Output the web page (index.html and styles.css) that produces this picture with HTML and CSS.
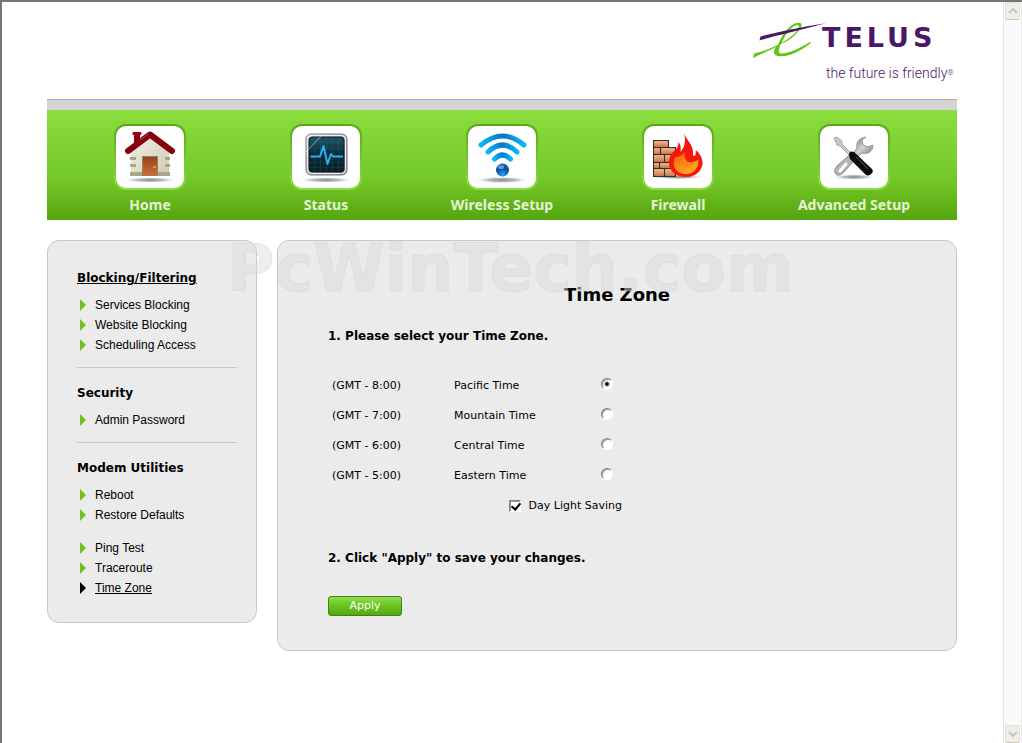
FILE: index.html
```html
<!DOCTYPE html>
<html lang="en">
<head>
  <meta charset="UTF-8" />
  <meta name="viewport" content="width=device-width, initial-scale=1.0"/>
  <title>Time Zone</title>
  <link rel="stylesheet" href="styles.css">
</head>
<body>
  <div class="page">
    <header class="header">
      <a class="logo" href="#">
        <span class="logo-row">
          <svg class="logo-mark" width="70" height="38" viewBox="0 0 70 38" aria-hidden="true">
            <path d="M1 38L2 33.500C18 30 34 22 43 13C47 9 48 5 45.500 5C42 5 35 12 31 20C27 27 25 33 29 33.500C36 34 48 28 58 22L59 23C49 31 35 38 26 36C21 35 21 31 24 27C16 31 9 34 1 38ZM26 25C29 17 35 7 43 3.500C49 1.500 51 4 48.500 8C44 16 35 22 26 25Z" fill="#5bc80f"/>
            <path d="M31 21C36 18 44 12 46 7C46 5 43 5 40 8C36 11 33 16 31 21Z" fill="#fff"/>
            <path d="M7.500 20.500L8.500 16.500Q42 8 74 3.300Q48 10 34 13.500Q20 16.500 7.500 20.500Z" fill="#4b1769"/>
          </svg>
          <span class="logo-name">TELUS</span>
        </span>
        <span class="logo-tag">the future is friendly<span class="logo-dot">®</span></span>
      </a>
    </header>

    <nav class="nav">
      <a href="#">
        <span class="tile">
          <svg width="68" height="62" viewBox="0 0 68 62" aria-hidden="true">
            <defs>
              <radialGradient id="shadow"><stop offset="0" stop-color="#888"/><stop offset="0.500" stop-color="#bbb"/><stop offset="1" stop-color="#fff" stop-opacity="0"/></radialGradient>
              <linearGradient id="wall" x1="0" y1="0" x2="1" y2="1"><stop offset="0" stop-color="#f2efe4"/><stop offset="1" stop-color="#cfcbb6"/></linearGradient>
              <linearGradient id="door" x1="0" y1="0" x2="0" y2="1"><stop offset="0" stop-color="#9c4317"/><stop offset="1" stop-color="#c4703c"/></linearGradient>
            </defs>
            <ellipse cx="34" cy="54" rx="28" ry="3" fill="url(#shadow)"/>
            <rect x="18" y="7" width="6" height="12" fill="#86000e"/>
            <rect x="16.500" y="6" width="9" height="3" rx="1" fill="#9b0716"/>
            <path d="M15 24L34 9L53 24V50H15Z" fill="url(#wall)"/>
            <path d="M14 31h6v3h-6zM14 38h6v3h-6zM14 46h12v4H14zM49 31h5v3h-5zM49 38h5v3h-5zM42 46h12v4H42z" fill="#aaa586"/>
            <path d="M26 50V30H42V50" fill="#8d8667"/>
            <rect x="27" y="31" width="14" height="19" fill="url(#door)"/>
            <path d="M37 41h3" stroke="#f5d08a"/>
            <path d="M12 25L34 8.500L56 25" fill="none" stroke="#86000e" stroke-width="6" stroke-linecap="round" stroke-linejoin="round"/>
            <path d="M24 14L33 7.500" stroke="#b5404b" stroke-width="1"/>
          </svg>
        </span>
        <span class="nav-label">Home</span>
      </a>
      <a href="#">
        <span class="tile">
          <svg width="68" height="62" viewBox="0 0 68 62" aria-hidden="true">
            <defs>
              <linearGradient id="frame" x1="0" y1="0" x2="1" y2="1"><stop offset="0" stop-color="#e4e4e8"/><stop offset="1" stop-color="#8b8b91"/></linearGradient>
              <linearGradient id="screen" x1="0" y1="0" x2="0" y2="1"><stop offset="0" stop-color="#1d5566"/><stop offset="0.500" stop-color="#0b2b38"/><stop offset="1" stop-color="#082028"/></linearGradient>
            </defs>
            <ellipse cx="34" cy="54" rx="28" ry="3" fill="url(#shadow)"/>
            <rect x="14" y="8" width="41" height="41" rx="5" fill="url(#frame)" stroke="#7d7d83"/>
            <rect x="15.500" y="9.500" width="38" height="38" rx="4" fill="none" stroke="#f0f0f3"/>
            <rect x="17" y="11" width="35" height="35" rx="3" fill="url(#screen)" stroke="#151b20"/>
            <path d="M22.500 11v35M28.500 11v35M34.500 11v35M40.500 11v35M46.500 11v35M17 16.500h35M17 22.500h35M17 36.500h35M17 41.500h35" stroke="#347585" stroke-opacity="0.200"/>
            <path d="M18.500 30.500H28L31.500 20L35.500 38L39 28L41 30.500H51" fill="none" stroke="#23b2f2" stroke-width="2" stroke-linejoin="round"/>
            <path d="M14 26L30 9" stroke="#fff" stroke-opacity="0.500"/>
          </svg>
        </span>
        <span class="nav-label">Status</span>
      </a>
      <a href="#">
        <span class="tile">
          <svg width="68" height="62" viewBox="0 0 68 62" aria-hidden="true">
            <defs>
              <linearGradient id="wave"><stop offset="0" stop-color="#08b7f3"/><stop offset="0.500" stop-color="#0877cc"/><stop offset="1" stop-color="#08b7f3"/></linearGradient>
              <radialGradient id="ball" cx="0.500" cy="0.850" r="0.800"><stop offset="0" stop-color="#26a7ee"/><stop offset="0.600" stop-color="#0a4fa3"/><stop offset="1" stop-color="#0b5fb8"/></radialGradient>
            </defs>
            <ellipse cx="34" cy="54" rx="28" ry="3.500" fill="url(#shadow)"/>
            <g fill="none" stroke="url(#wave)" stroke-width="5" stroke-linecap="round">
              <path d="M13 19Q34.500 1 56 19"/>
              <path d="M20 26Q34.500 12 49 26"/>
              <path d="M26.500 33Q34.500 25 42.500 33"/>
            </g>
            <circle cx="34.500" cy="44" r="6.500" fill="url(#ball)"/>
            <ellipse cx="33" cy="41" rx="3" ry="2" fill="#8ccbf5" fill-opacity="0.600"/>
          </svg>
        </span>
        <span class="nav-label">Wireless Setup</span>
      </a>
      <a href="#">
        <span class="tile">
          <svg width="68" height="62" viewBox="0 0 68 62" aria-hidden="true">
            <defs>
              <linearGradient id="brick" x1="0" y1="0" x2="0" y2="1"><stop offset="0" stop-color="#f2b48c"/><stop offset="1" stop-color="#c8794c"/></linearGradient>
              <linearGradient id="ember" x1="0" y1="0" x2="0.600" y2="1"><stop offset="0" stop-color="#ff5a0a"/><stop offset="1" stop-color="#ffa81e"/></linearGradient>
            </defs>
            <ellipse cx="34" cy="51" rx="28" ry="2.500" fill="url(#shadow)"/>
            <path d="M9 14H25V21H32V51H9Z" fill="#36302d"/>
            <g fill="url(#brick)">
              <rect x="10" y="15" width="14" height="6" rx="1"/>
              <rect x="10" y="22" width="6" height="6" rx="1"/><rect x="17" y="22" width="14" height="6" rx="1"/>
              <rect x="10" y="29" width="10" height="7" rx="1"/><rect x="21" y="29" width="10" height="7" rx="1"/>
              <rect x="10" y="37" width="5" height="5" rx="1"/><rect x="16" y="37" width="14" height="5" rx="1"/>
              <rect x="10" y="43" width="10" height="7" rx="1"/><rect x="21" y="43" width="10" height="7" rx="1"/>
            </g>
            <path d="M40 7C42 14 50 19 49 28C49 32 53 30 51.500 24C56 27 59 33 58.500 38C57 46 51 51 42 51C32 51 25 45 25 37C25 30 28 27 32 23C35 20 34 18 34.500 16C37 19 37 22 36.500 26C41 21 42 15 40 7Z" fill="#f5160c"/>
            <path d="M31 31C35 31 38 30 40.500 26C40 32 42 37 47 36C51 36 54 34 54.500 33C55 44 48 48 42 48C33 48 27 41 31 31Z" fill="url(#ember)"/>
          </svg>
        </span>
        <span class="nav-label">Firewall</span>
      </a>
      <a href="#">
        <span class="tile">
          <svg width="68" height="62" viewBox="0 0 68 62" aria-hidden="true">
            <defs>
              <linearGradient id="steel" x1="0" y1="0" x2="1" y2="1"><stop offset="0" stop-color="#777"/><stop offset="0.500" stop-color="#d2d2d2"/><stop offset="1" stop-color="#777"/></linearGradient>
            </defs>
            <ellipse cx="34" cy="51" rx="22" ry="3" fill="url(#shadow)"/>
            <path d="M33 26L38 30L24 46Q19 51 16 48Q13 45 17 40Z" fill="#b5b5b5" stroke="#858585"/>
            <path d="M26 38L20 45" stroke="#fff" stroke-width="3" stroke-linecap="round"/>
            <path d="M46 11C39 12 36 16 37 22L34 26L38 30L42 27C48 29 53 25 53 19L48 21L43 19L42 14Z" fill="url(#steel)" stroke="#999"/>
            <path d="M14 12L17 11L22 15L22 18L34 30L32 32L20 20L17 19Z" fill="#c7c7c7" stroke="#aaa"/>
            <path d="M29 29Q29 24 34 26L52 43Q54 46 51 48Q48 51 45 48L30 33Z" fill="#0c0c0c"/>
            <path d="M36 31L48 43" stroke="#555"/>
          </svg>
        </span>
        <span class="nav-label">Advanced Setup</span>
      </a>
    </nav>

    <div class="content">
      <aside class="panel sidebar">
        <section>
          <h2><a class="current" href="#">Blocking/Filtering</a></h2>
          <ul>
            <li><a href="#">Services Blocking</a></li>
            <li><a href="#">Website Blocking</a></li>
            <li><a href="#">Scheduling Access</a></li>
          </ul>
        </section>
        <section>
          <h2>Security</h2>
          <ul>
            <li><a href="#">Admin Password</a></li>
          </ul>
        </section>
        <section>
          <h2>Modem Utilities</h2>
          <ul>
            <li><a href="#">Reboot</a></li>
            <li><a href="#">Restore Defaults</a></li>
          </ul>
          <ul class="more">
            <li><a href="#">Ping Test</a></li>
            <li><a href="#">Traceroute</a></li>
            <li class="active"><a class="current" href="#">Time Zone</a></li>
          </ul>
        </section>
      </aside>

      <main class="panel main">
        <h1>Time Zone</h1>
        <form>
          <p class="step">1. Please select your Time Zone.</p>
          <table class="zones">
            <tr>
              <td class="gmt">(GMT - 8:00)</td>
              <td class="zone"><label for="pacific">Pacific Time</label></td>
              <td class="pick"><input type="radio" name="zone" id="pacific" checked></td>
            </tr>
            <tr>
              <td class="gmt">(GMT - 7:00)</td>
              <td class="zone"><label for="mountain">Mountain Time</label></td>
              <td class="pick"><input type="radio" name="zone" id="mountain"></td>
            </tr>
            <tr>
              <td class="gmt">(GMT - 6:00)</td>
              <td class="zone"><label for="central">Central Time</label></td>
              <td class="pick"><input type="radio" name="zone" id="central"></td>
            </tr>
            <tr>
              <td class="gmt">(GMT - 5:00)</td>
              <td class="zone"><label for="eastern">Eastern Time</label></td>
              <td class="pick"><input type="radio" name="zone" id="eastern"></td>
            </tr>
            <tr>
              <td class="saving" colspan="3"><input type="checkbox" id="dst" checked><label for="dst">Day Light Saving</label></td>
            </tr>
          </table>
          <p class="step save">2. Click "Apply" to save your changes.</p>
          <button class="apply" type="button">Apply</button>
        </form>
      </main>

      <div class="watermark">PcWinTech.com</div>
    </div>
  </div>

  <div class="scrollbar">
    <button type="button" aria-label="Scroll up"><svg width="10" height="6" viewBox="0 0 10 6"><path d="M1 5L5 1L9 5" fill="none" stroke="#c6c5bb" stroke-width="2"/></svg></button>
    <button type="button" aria-label="Scroll down"><svg width="10" height="6" viewBox="0 0 10 6"><path d="M1 1L5 5L9 1" fill="none" stroke="#c6c5bb" stroke-width="2"/></svg></button>
  </div>
</body>
</html>
```

FILE: styles.css
```css
* {
  box-sizing: border-box;
}
body {
  margin: 0;
  min-height: 100vh;
  display: flex;
  border-top: 2px solid #77766f;
  border-left: 2px solid #77766f;
  background: #fff;
  color: #000;
  font-family: Verdana, "DejaVu Sans", sans-serif;
  font-size: 11px;
}
a {
  color: inherit;
  text-decoration: none;
}
h1, h2, p, ul {
  margin: 0;
  padding: 0;
}
.page {
  flex: 1;
  padding: 0 46px 0 45px;
}

/* header */
.header {
  display: flex;
  justify-content: flex-end;
  height: 97px;
  padding-top: 18px;
}
.logo {
  display: flex;
  flex-direction: column;
  width: 205px;
  color: #4b1769;
}
.logo-row {
  display: flex;
  height: 40px;
}
.logo-mark {
  overflow: visible;
}
.logo-name {
  font-size: 27px;
  font-weight: bold;
  line-height: 36px;
  letter-spacing: 4px;
}
.logo-tag {
  padding-left: 74px;
  font-family: Roboto, "Liberation Sans", sans-serif;
  font-size: 14px;
  font-weight: 300;
  line-height: 26px;
  white-space: nowrap;
}
.logo-dot {
  font-size: 8px;
  vertical-align: 3px;
}

/* top navigation */
.nav {
  display: flex;
  height: 121px;
  padding: 14px 15px 0;
  border-top: 1px solid #aaa;
  background: linear-gradient(#d3d3d3 10px, #8cde40 10px, #74c728 80px, #55a50f);
}
.nav a {
  flex: 1;
  display: flex;
  flex-direction: column;
  align-items: center;
  padding-top: 10px;
}
.tile {
  padding: 2px;
  border-radius: 12px;
  background: linear-gradient(#57a812, #8ede44);
}
.tile svg {
  display: block;
  border-radius: 10px;
  background: #fff;
}
.nav-label {
  margin-top: 5px;
  color: #e3f4d3;
  font-family: "Noto Sans", sans-serif;
  font-size: 14px;
  font-weight: bold;
  line-height: 20px;
}

/* panels */
.content {
  position: relative;
  display: flex;
  align-items: flex-start;
  gap: 20px;
  margin-top: 20px;
}
.panel {
  border: 1px solid #c8c8c8;
  border-radius: 12px;
  background: #ebebeb;
}
.sidebar {
  width: 210px;
  padding: 12px 19px 12px 29px;
}
.sidebar section {
  padding: 15px 0 12px;
  border-bottom: 1px solid #c8c8c8;
}
.sidebar section:last-child {
  border-bottom: 0;
}
.sidebar h2 {
  margin-bottom: 7px;
  font-size: 12px;
  line-height: 20px;
}
.sidebar ul {
  list-style: none;
  font-family: Arial, "Liberation Sans", sans-serif;
  font-size: 12px;
  line-height: 20px;
}
.sidebar .more {
  margin-top: 13px;
}
.sidebar li {
  display: flex;
  align-items: center;
  gap: 9px;
  padding-left: 3px;
}
.sidebar li::before {
  content: "";
  border: 6px solid transparent;
  border-left-color: #6fbf1f;
  border-right: 0;
}
.sidebar .active::before {
  border-left-color: #000;
}
.current {
  text-decoration: underline;
}
.main {
  flex: 1;
  padding: 42px 50px 34px;
}
.main h1 {
  font-size: 18px;
  line-height: 24px;
  text-align: center;
}
.step {
  margin-top: 19px;
  font-size: 12px;
  font-weight: bold;
  line-height: 20px;
}
.zones {
  margin-top: 24px;
  border-collapse: collapse;
}
.zones td {
  height: 30px;
  padding: 0 4px;
}
.zones .gmt {
  width: 122px;
}
.zones .zone {
  width: 138px;
}
.zones .pick {
  width: 38px;
  padding-bottom: 4px;
  text-align: center;
}
.zones .saving {
  text-align: right;
}
.zones input {
  appearance: none;
  width: 12px;
  height: 12px;
  margin: 0;
  border: 1px solid;
  border-color: #808080 #fff #fff #808080;
  background: #fff;
  box-shadow: inset 1px 1px #9c9c98;
  vertical-align: middle;
}
.zones input[type="radio"] {
  border-radius: 50%;
}
.zones input[type="radio"]:checked {
  background: radial-gradient(circle, #000 1px, #fff 3px);
}
.zones input[type="checkbox"] {
  margin-right: 8px;
}
.zones input[type="checkbox"]:checked::before {
  content: "";
  display: block;
  width: 4px;
  height: 7px;
  margin: 0 0 0 3px;
  border: solid #000;
  border-width: 0 2px 2px 0;
  transform: rotate(40deg);
}
.save {
  margin-top: 28px;
}
.apply {
  display: block;
  width: 74px;
  height: 20px;
  margin-top: 28px;
  padding: 0;
  border: 1px solid #3f8412;
  border-radius: 3px;
  background: linear-gradient(#93da55, #6fc824 40%, #55a813);
  color: #fff;
  font-family: Verdana, "DejaVu Sans", sans-serif;
  font-size: 11px;
  line-height: 18px;
}
.watermark {
  position: absolute;
  top: -10px;
  left: 180px;
  color: rgba(220, 220, 220, 0.5);
  font-size: 65px;
  font-weight: bold;
  line-height: 78px;
  pointer-events: none;
  -webkit-text-stroke: 1px rgba(205, 205, 205, 0.3);
}

/* scrollbar */
.scrollbar {
  width: 19px;
  display: flex;
  flex-direction: column;
  justify-content: space-between;
  border-left: 1px solid #e6e6eb;
  border-right: 1px solid #e9e9ed;
  background: #fafafd;
}
.scrollbar button {
  display: flex;
  align-items: center;
  justify-content: center;
  height: 18px;
  margin: 0 1px;
  padding: 0;
  border: 1px solid #e2e1d8;
  border-bottom-color: #cbc9b4;
  border-radius: 2px;
  background: #efefea;
}
```
